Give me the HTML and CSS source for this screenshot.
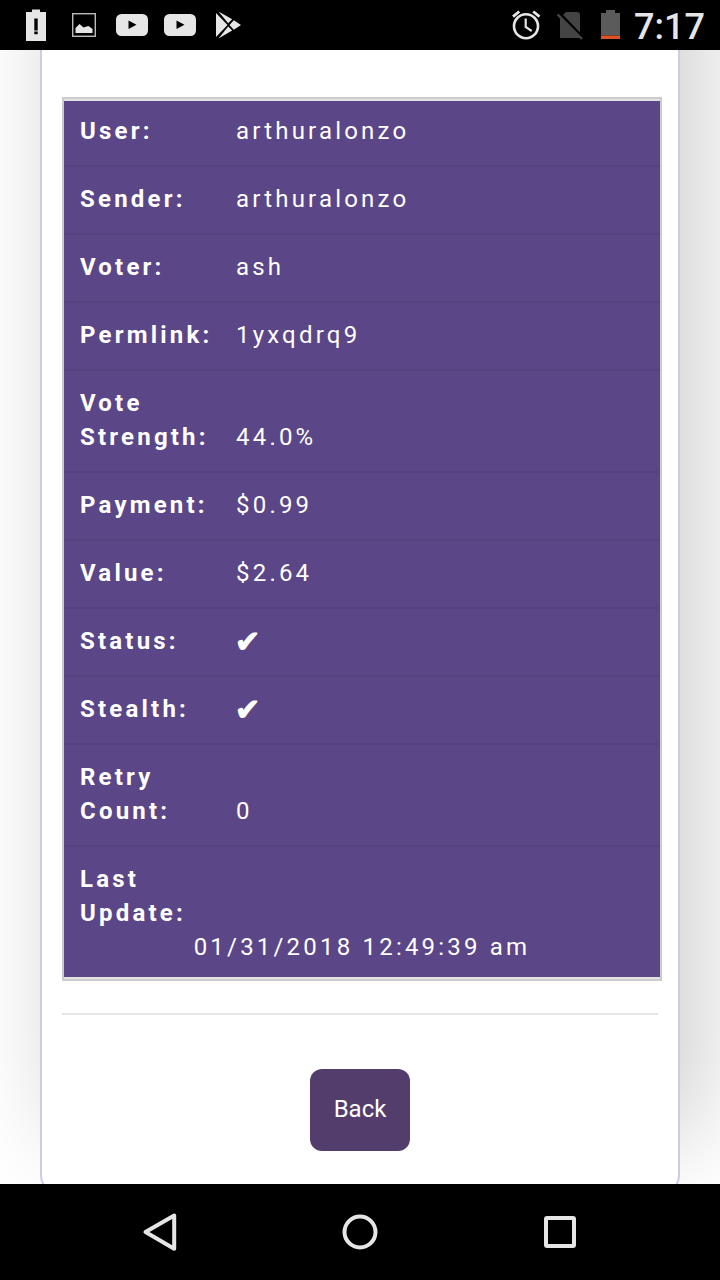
FILE: index.html
```html
<!DOCTYPE html>
<html lang="en" dir="ltr">
	<head>
		<meta charset="utf-8">
		<meta name="viewport" content="width=device-width,initial-scale=1">
		<title>Vote Details</title>
		<link rel="stylesheet" href="styles.css">
	</head>

	<body>
		<header class="status-bar">
			<svg class="status-bar__notifications" width="260" height="50" aria-hidden="true">
				<g fill="#e6e6e6">
					<path d="M26 12h6v-2.500h8v2.500h6v29h-20zM34.300 18.500v12h3.400v-12zM34.300 31.500v2.800h3.400v-2.800z" fill-rule="evenodd" />
					<path d="M75.500 33v-5l4-4 4 3.500 3-1 2-.5 4 3v4z" />
					<rect x="116" y="14" width="32" height="22" rx="5.500" />
					<rect x="164" y="14" width="32" height="22" rx="5.500" />
					<path d="M216 13v24l11.500-12zM218.500 11.500l9.700 11.700 4-4zM218.500 38.500l9.700-11.900 4 4zM233.800 20.300l7.200 4.700-7.200 4.700-4.300-4.700z" />
				</g>
				<rect x="72.700" y="13.700" width="22.600" height="22.600" fill="none" stroke="#bbb" stroke-width="1.400" />
				<path d="M128.500 20.500v8.500l8-4.250zM176.500 20.500v8.500l8-4.250z" fill="#000" />
			</svg>

			<div class="status-bar__system">
				<svg width="120" height="50" aria-hidden="true">
					<g fill="none" stroke="#e6e6e6">
						<circle cx="16" cy="26.200" r="12" stroke-width="2.600" />
						<path d="M15.700 18.500v8.500l6 4" stroke-width="2.200" />
						<path d="M3 16.700l6.300-5.200M29.500 16.700l-6.300-5.200" stroke-width="2.800" />
					</g>
					<path d="M56 12h11q3 0 3 3v23h-20v-20z" fill="#444" />
					<path d="M49.500 13.300l24 25" stroke="#000" stroke-width="2.800" />
					<path d="M47.500 14.300l24.500 24.700" stroke="#444" stroke-width="2.400" />
					<path d="M91 13h5v-3h9v3h5v22.500h-19z" fill="#5b5b5b" />
					<rect x="91" y="35.500" width="19" height="3.500" fill="#dd5226" />
				</svg>
				<span class="status-bar__time">7:17</span>
			</div>
		</header>

		<main class="page">
			<section class="card">
				<dl class="details">
					<div class="details__row">
						<dt>User:</dt>
						<dd>arthuralonzo</dd>
					</div>
					<div class="details__row">
						<dt>Sender:</dt>
						<dd>arthuralonzo</dd>
					</div>
					<div class="details__row">
						<dt>Voter:</dt>
						<dd>ash</dd>
					</div>
					<div class="details__row">
						<dt>Permlink:</dt>
						<dd>1yxqdrq9</dd>
					</div>
					<div class="details__row">
						<dt>Vote Strength:</dt>
						<dd>44.0%</dd>
					</div>
					<div class="details__row">
						<dt>Payment:</dt>
						<dd>$0.99</dd>
					</div>
					<div class="details__row">
						<dt>Value:</dt>
						<dd>$2.64</dd>
					</div>
					<div class="details__row">
						<dt>Status:</dt>
						<dd class="details__check">✔</dd>
					</div>
					<div class="details__row">
						<dt>Stealth:</dt>
						<dd class="details__check">✔</dd>
					</div>
					<div class="details__row">
						<dt>Retry Count:</dt>
						<dd>0</dd>
					</div>
					<div class="details__row details__row--stacked">
						<dt>Last Update:</dt>
						<dd>01/31/2018 12:49:39 am</dd>
					</div>
				</dl>

				<hr class="divider">

				<button type="button" class="back">Back</button>
			</section>
		</main>

		<nav class="nav-bar">
			<svg width="40" height="40" aria-label="Back">
				<path d="M34.200 3.500v33.200L5.500 20.100z" />
			</svg>
			<svg width="40" height="40" aria-label="Home">
				<circle cx="20" cy="20" r="15.500" />
			</svg>
			<svg width="40" height="40" aria-label="Recent apps">
				<rect x="6" y="6" width="28" height="28" rx="1" />
			</svg>
		</nav>
	</body>
</html>
```
FILE: styles.css
```css
/* PAGE STYLING */
* {
	box-sizing: border-box;
}
body {
	background: #fff;
	display: flex;
	flex-direction: column;
	font-family: Roboto, sans-serif;
	font-size: 24px;
	height: 1280px;
	line-height: 34px;
	margin: 0;
	overflow: hidden;
}
svg {
	display: block;
	flex: none;
}

/* STATUS BAR */
.status-bar {
	background: #000;
	display: flex;
	flex: none;
	height: 50px;
	justify-content: space-between;
}
.status-bar__system {
	display: flex;
	width: 210px;
}
.status-bar__time {
	color: #e6e6e6;
	font-size: 36px;
	font-weight: 500;
	line-height: 54px;
	margin-inline-start: 4px;
	white-space: nowrap;
}

/* CARD */
.page {
	flex: 1;
	min-height: 0;
	overflow: hidden;
	padding-inline: 40px;
}
.card {
	background: #fff;
	border: 2px solid #d3c9e6;
	border-radius: 16px;
	box-shadow: 20px -54px 100px rgba(0, 0, 0, 0.2);
	height: 1542px;
	margin-block-start: -400px;
	padding: 445px 20px 0;
}

/* DETAILS */
.details {
	background: #5b4687;
	border: 2px solid #ccc;
	color: #fff;
	letter-spacing: 3.2px;
	margin: 0;
	width: 600px;
}
.details__row {
	align-items: flex-end;
	border-block-start: 2px solid #56427f;
	display: flex;
	padding: 15px 16px 17px;

	&:first-child {
		border-color: #e2e2e2;
		padding-block-start: 13px;
	}

	dt {
		flex: none;
		font-weight: 700;
		padding-inline-end: 20px;
		width: 156px;
	}

	dd {
		margin: 0;
	}
}
.details__row--stacked {
	border-block-end: 2px solid #e2e2e2;
	display: block;
	padding-block-end: 13px;

	dd {
		text-align: center;
	}
}
.details__row .details__check {
	-webkit-text-stroke: 1.2px #fff;
	font-family: "DejaVu Sans", sans-serif;
	font-size: 30px;
	margin-block: 1px -1px;
	margin-inline-start: -1px;
}

.divider {
	background: #e5e5e5;
	border: none;
	height: 2px;
	margin: 32px 0 54px;
}

.back {
	background: #533d6c;
	border: none;
	border-radius: 12px;
	color: #fff;
	display: block;
	font: inherit;
	height: 82px;
	margin-inline: auto;
	padding: 0 0 2px;
	width: 100px;
}

/* NAVIGATION BAR */
.nav-bar {
	background: #000;
	display: flex;
	flex: none;
	gap: 160px;
	height: 96px;
	justify-content: center;
	padding-block-start: 28px;

	svg {
		fill: none;
		stroke: #e6e6e6;
		stroke-linejoin: round;
		stroke-width: 4px;
	}
}
```
